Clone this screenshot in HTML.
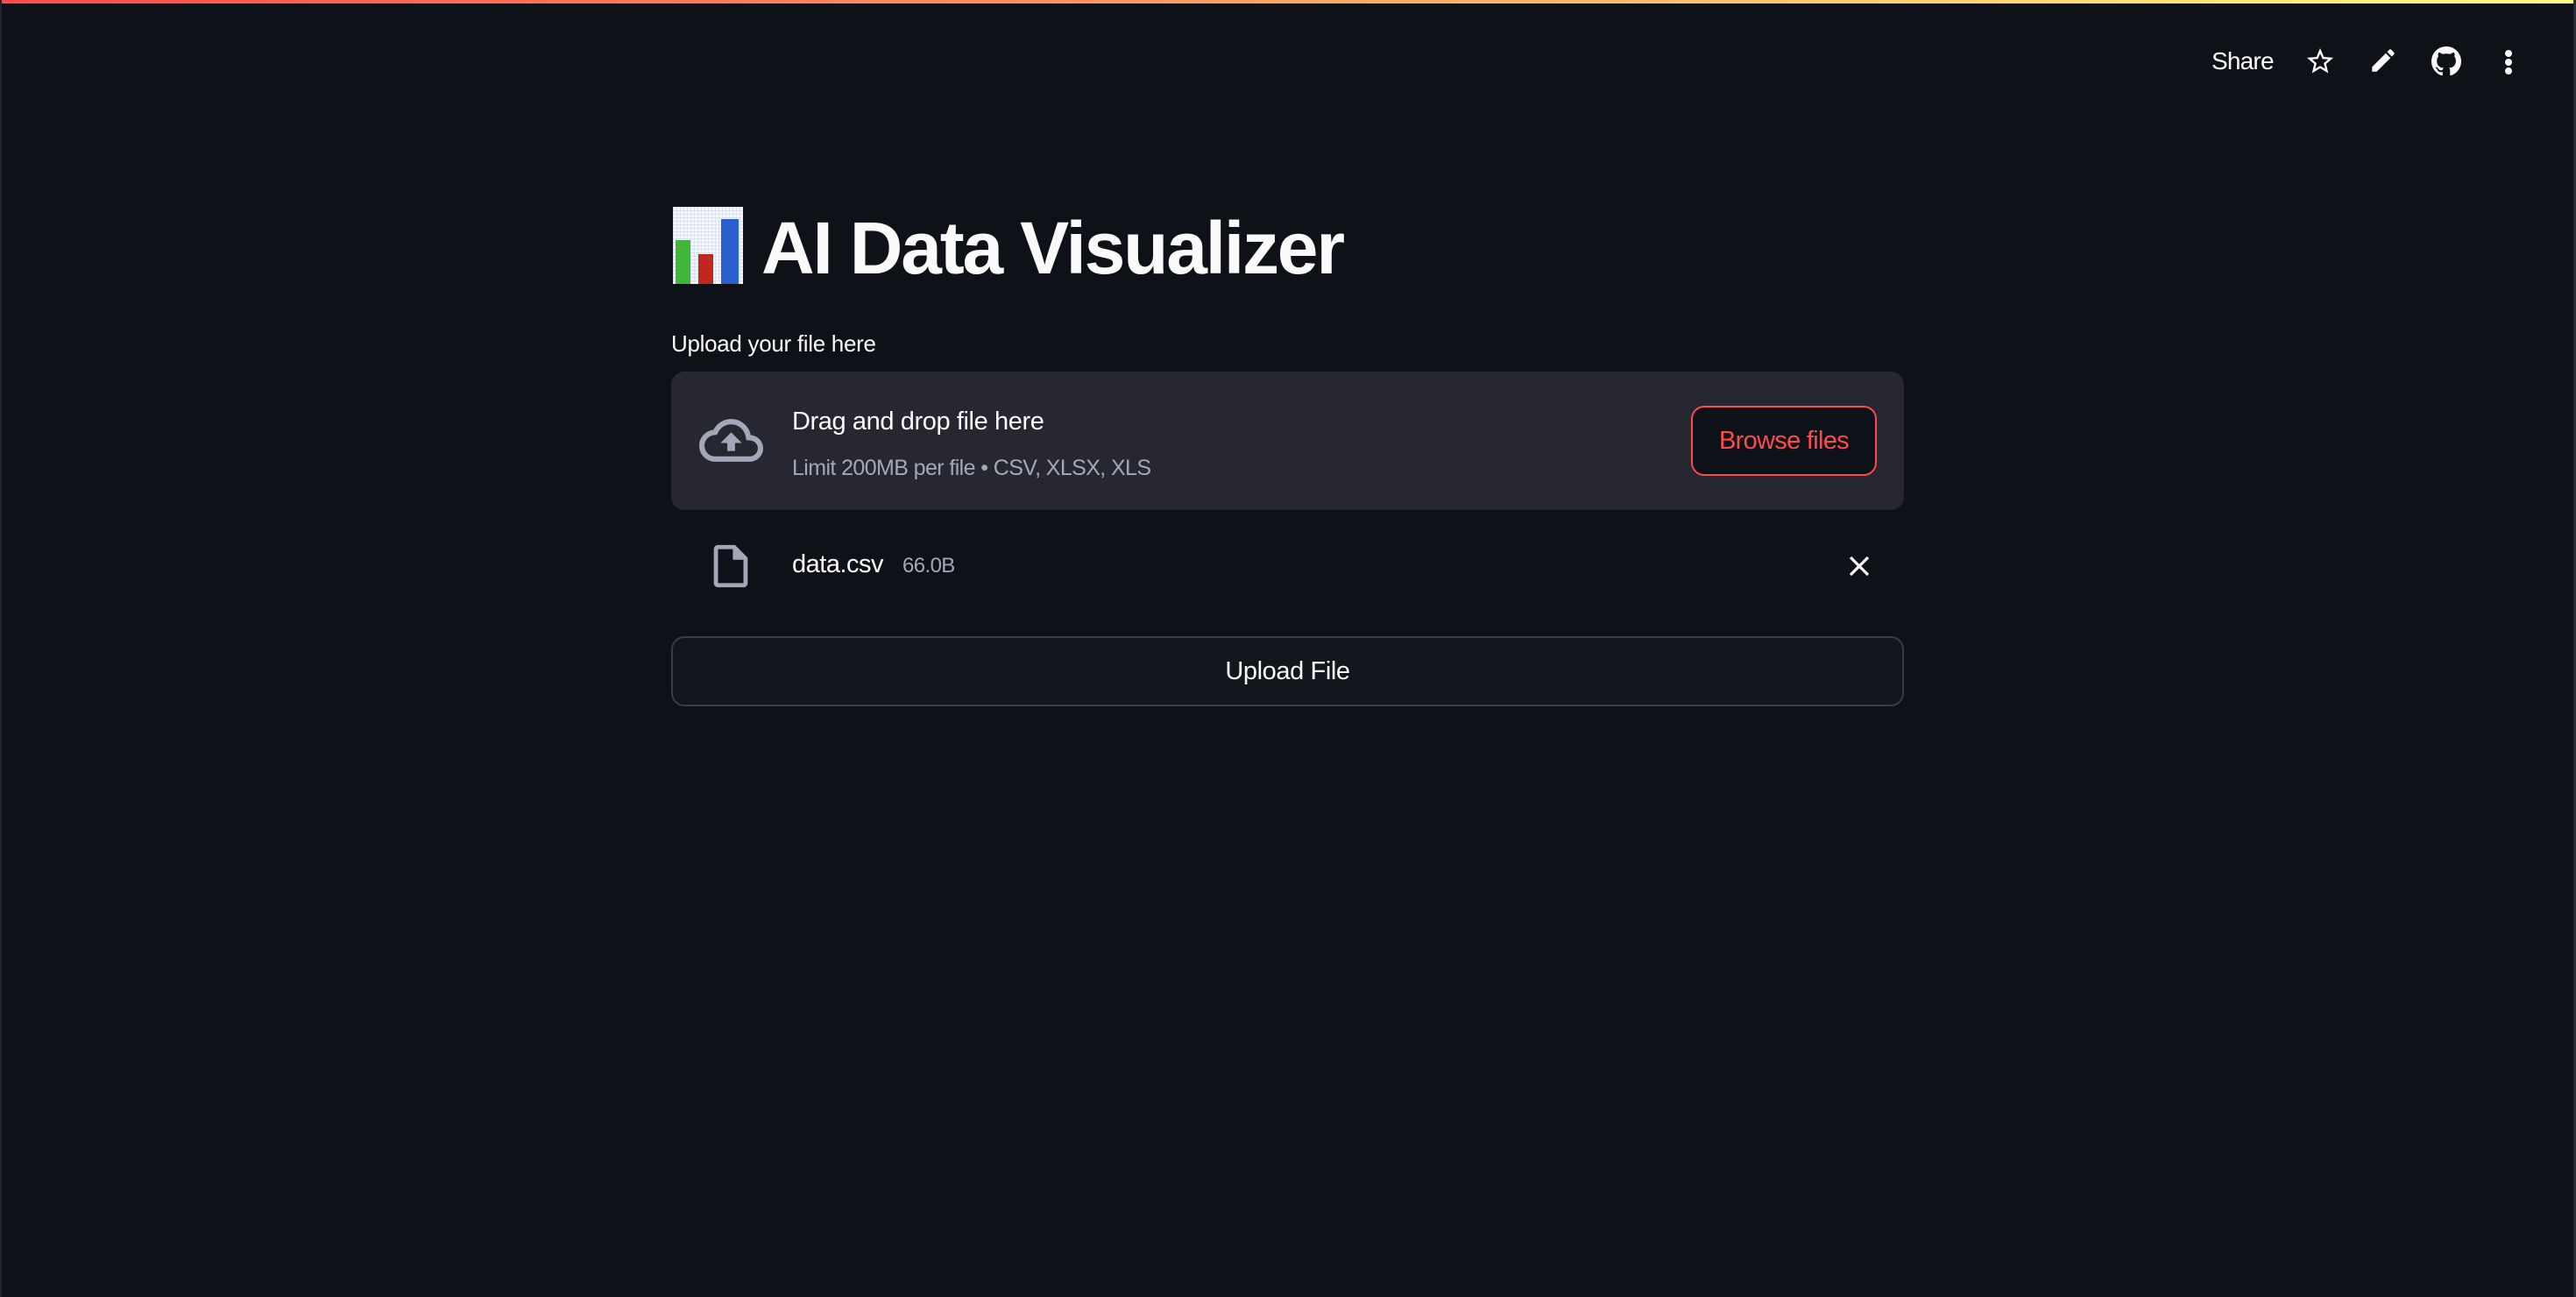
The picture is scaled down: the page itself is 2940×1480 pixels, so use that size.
<!DOCTYPE html>
<html><head><meta charset="utf-8"><style>
html,body{margin:0;padding:0}
body{width:2940px;height:1480px;background:#0e1117;position:relative;overflow:hidden;font-family:"Liberation Sans",sans-serif;color:#fafafa}
.bar{position:absolute;left:0;top:0;width:2940px;height:4px;background:linear-gradient(90deg,#ff4b4b,#fffd80)}
.a{position:absolute;white-space:nowrap}
</style></head><body>
<div class="bar"></div>
<div style="position:absolute;right:0;top:0;width:3px;height:1480px;background:#2a2c33"></div>
<div style="position:absolute;left:0;top:0;width:2px;height:1480px;background:#22242b"></div>

<!-- header -->
<div class="a" style="left:2524px;top:54px;font-size:28px;letter-spacing:-0.8px">Share</div>
<svg class="a" style="left:2630px;top:52px" width="36" height="36" viewBox="0 0 24 24"><path fill="#fafafa" d="M22 9.24l-7.19-.62L12 2 9.19 8.63 2 9.24l5.46 4.73L5.82 21 12 17.27 18.18 21l-1.63-7.03L22 9.24zM12 15.4l-3.76 2.27 1-4.28-3.32-2.88 4.38-.38L12 6.1l1.71 4.04 4.38.38-3.32 2.88 1 4.28L12 15.4z"/></svg>
<svg class="a" style="left:2703px;top:52px" width="34" height="34" viewBox="0 0 24 24"><path fill="#fafafa" d="M3 17.25V21h3.75L17.81 9.94l-3.75-3.75L3 17.25zM20.71 7.04c.39-.39.39-1.02 0-1.41l-2.34-2.34c-.39-.39-1.02-.39-1.41 0l-1.83 1.83 3.75 3.75 1.83-1.83z"/></svg>
<svg class="a" style="left:2775px;top:53px" width="34" height="34" viewBox="0 0 16 16"><path fill="#fafafa" d="M8 0C3.580 0 0 3.58 0 8c0 3.54 2.29 6.530 5.47 7.59.4.07.55-.17.55-.38 0-.19-.01-.82-.01-1.49-2.01.37-2.530-.49-2.69-.94-.09-.23-.48-.94-.82-1.13-.28-.15-.68-.52-.01-.53.63-.01 1.08.58 1.23.82.72 1.21 1.87.87 2.33.66.07-.52.28-.87.51-1.07-1.78-.2-3.64-.89-3.64-3.95 0-.87.31-1.59.82-2.15-.08-.2-.36-1.02.08-2.12 0 0 .67-.21 2.2.82.64-.18 1.32-.27 2-.27.68 0 1.36.09 2 .27 1.53-1.04 2.2-.82 2.2-.82.44 1.1.16 1.92.08 2.12.51.56.82 1.27.82 2.15 0 3.07-1.87 3.75-3.65 3.95.29.25.54.73.54 1.48 0 1.07-.01 1.93-.01 2.2 0 .21.15.46.55.38A8.013 8.013 0 0016 8c0-4.42-3.58-8-8-8z"/></svg>
<div class="a" style="left:2859px;top:57px;width:8px;height:8px;border-radius:50%;background:#fafafa"></div>
<div class="a" style="left:2859px;top:67px;width:8px;height:8px;border-radius:50%;background:#fafafa"></div>
<div class="a" style="left:2859px;top:77px;width:8px;height:8px;border-radius:50%;background:#fafafa"></div>

<!-- title emoji -->
<svg class="a" style="left:768px;top:236px" width="80" height="88" viewBox="0 0 80 88">
<defs><pattern id="g" width="4" height="4" patternUnits="userSpaceOnUse"><rect width="4" height="4" fill="#f4f6fa"/><path d="M0 0H4M0 0V4" stroke="#c8d2e6" stroke-width="1"/></pattern></defs>
<rect x="0" y="0" width="80" height="88" fill="url(#g)"/>
<rect x="3" y="38" width="17" height="50" fill="#3fb73a"/>
<rect x="29" y="54" width="17" height="34" fill="#c0281e"/>
<rect x="55" y="14" width="20" height="74" fill="#2a5fd0"/>
</svg>
<div class="a" style="left:869px;top:233px;font-size:84px;font-weight:bold;letter-spacing:-2.2px;line-height:100px">AI Data Visualizer</div>

<div class="a" style="left:766px;top:377px;font-size:26px;letter-spacing:-0.3px">Upload your file here</div>

<!-- dropzone -->
<div class="a" style="left:766px;top:424px;width:1407px;height:158px;background:#262730;border-radius:15px"></div>
<svg class="a" style="left:798px;top:466px" width="73" height="73" viewBox="0 0 24 24"><path fill="#a3a8b8" d="M19.35 10.04C18.67 6.59 15.64 4 12 4 9.11 4 6.6 5.64 5.35 8.04 2.34 8.36 0 10.91 0 14c0 3.31 2.69 6 6 6h13c2.76 0 5-2.24 5-5 0-2.64-2.05-4.78-4.65-4.96zM19 18H6c-2.21 0-4-1.790-4-4 0-2.05 1.53-3.76 3.56-3.97l1.07-.11.5-.95C8.08 7.14 9.94 6 12 6c2.62 0 4.88 1.86 5.39 4.43l.3 1.5 1.53.11c1.56.1 2.78 1.41 2.78 2.96 0 1.65-1.35 3-3 3zM8 13h2.55v3h2.9v-3H16l-4-4z"/></svg>
<div class="a" style="left:904px;top:465px;font-size:29px;letter-spacing:-0.4px">Drag and drop file here</div>
<div class="a" style="left:904px;top:520px;font-size:25px;letter-spacing:-0.6px;color:#a3a8b8">Limit 200MB per file • CSV, XLSX, XLS</div>
<div class="a" style="left:1930px;top:463px;width:208px;height:76px;border:2px solid #ff4b4b;border-radius:15px;background:#0e1117;color:#ff4b4b;font-size:29px;letter-spacing:-0.7px;text-align:center;line-height:76px">Browse files</div>

<!-- file row -->
<svg class="a" style="left:805px;top:617px" width="58" height="58" viewBox="0 0 24 24"><path fill="#a3a8b8" d="M14 2H6c-1.1 0-1.99.9-1.99 2L4 20c0 1.1.89 2 1.99 2H18c1.1 0 2-.9 2-2V8l-6-6zM6 20V4h7v5h5v11H6z"/></svg>
<div class="a" style="left:904px;top:628px;font-size:29px;letter-spacing:-0.5px">data.csv</div>
<div class="a" style="left:1030px;top:632px;font-size:24px;letter-spacing:-0.6px;color:#a3a8b8">66.0B</div>
<svg class="a" style="left:2110px;top:634px" width="24" height="24" viewBox="0 0 24 24"><path d="M2 2L22 22M22 2L2 22" stroke="#fafafa" stroke-width="3.2"/></svg>

<!-- upload button -->
<div class="a" style="left:766px;top:726px;width:1403px;height:76px;border:2px solid #3a3c44;border-radius:15px;background:#13161d;text-align:center;line-height:76px;font-size:29px;letter-spacing:-0.4px">Upload File</div>
</body></html>
